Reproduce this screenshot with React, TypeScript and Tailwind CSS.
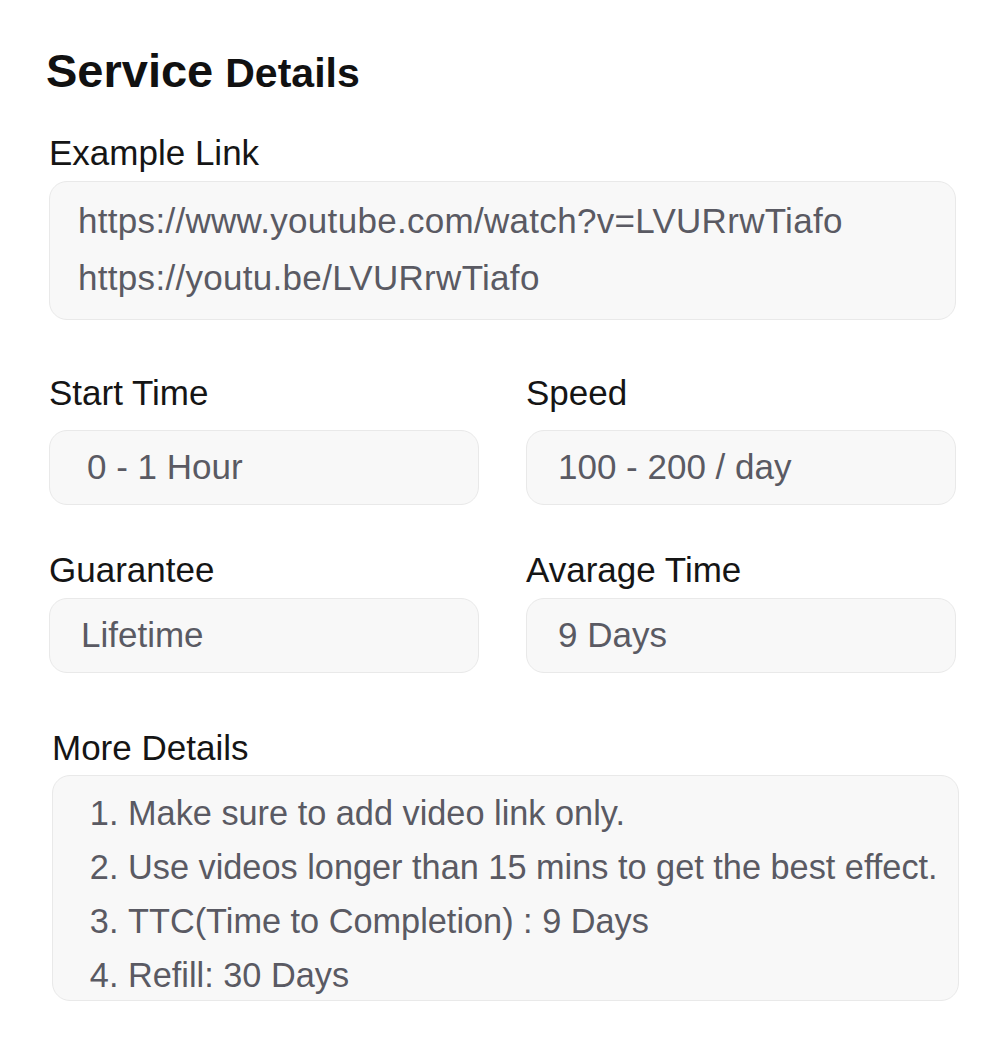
import React from 'react';

const font = { fontFamily: '"Liberation Sans", Arial, sans-serif' };

const labelCls = 'text-[35px] leading-[40px] text-[#151515]';

const Field: React.FC<{ label: string; value: string; indent?: string; gap?: string }> = ({
  label,
  value,
  indent = 'pl-[31px]',
  gap = 'mt-[17px]'
}) => (
  <div className="flex flex-col">
    <div className={labelCls}>{label}</div>
    <div
      className={`${gap} h-[75px] flex items-center rounded-[18px] border border-[#e9e9e9] bg-[#f8f8f8] ${indent} text-[35px] text-[#5a5a63]`}
    >
      {value}
    </div>
  </div>
);

const App: React.FC = () => {
  const details = [
    'Make sure to add video link only.',
    'Use videos longer than 15 mins to get the best effect.',
    'TTC(Time to Completion) : 9 Days',
    'Refill: 30 Days'
  ];

  return (
    <div className="min-h-screen bg-white pl-[49px] pr-[52px] pt-[48px]" style={font}>
      <h1 className="flex h-[46px] items-baseline gap-[12px] font-bold text-[#111] leading-[46px] -ml-[3px]">
        <span className="text-[47px]">Service</span>
        <span className="text-[41px]">Details</span>
      </h1>

      {/* Example link */}
      <div className={`mt-[39px] ${labelCls}`}>Example Link</div>
      <div className="mt-[8px] rounded-[18px] border border-[#e9e9e9] bg-[#f8f8f8] pl-[28px] pt-[10px] pb-[13px] text-[35px] tracking-[0.3px] leading-[57px] text-[#5a5a63]">
        <div>https://www.youtube.com/watch?v=LVURrwTiafo</div>
        <div>https://youtu.be/LVURrwTiafo</div>
      </div>

      <div className="mt-[53px] grid grid-cols-2 gap-x-[47px]">
        <Field label="Start Time" value="0 - 1 Hour" indent="pl-[37px]" />
        <Field label="Speed" value="100 - 200 / day" />
      </div>
      <div className="mt-[45px] grid grid-cols-2 gap-x-[47px]">
        <Field label="Guarantee" value="Lifetime" gap="mt-[8px]" />
        <Field label="Avarage Time" value="9 Days" gap="mt-[8px]" />
      </div>

      {/* More details */}
      <div className="ml-[3px] -mr-[3px] mt-[55px]">
        <div className={labelCls}>More Details</div>
        <div className="mt-[7px] h-[226px] overflow-hidden rounded-[18px] border border-[#e9e9e9] bg-[#f8f8f8] pt-[10px]">
          <ol className="list-decimal pl-[75px] text-[34.3px] leading-[54px] text-[#5a5a63]">
            {details.map((d, i) => (
              <li key={i}>{d}</li>
            ))}
          </ol>
        </div>
      </div>
    </div>
  );
};

export default App;
